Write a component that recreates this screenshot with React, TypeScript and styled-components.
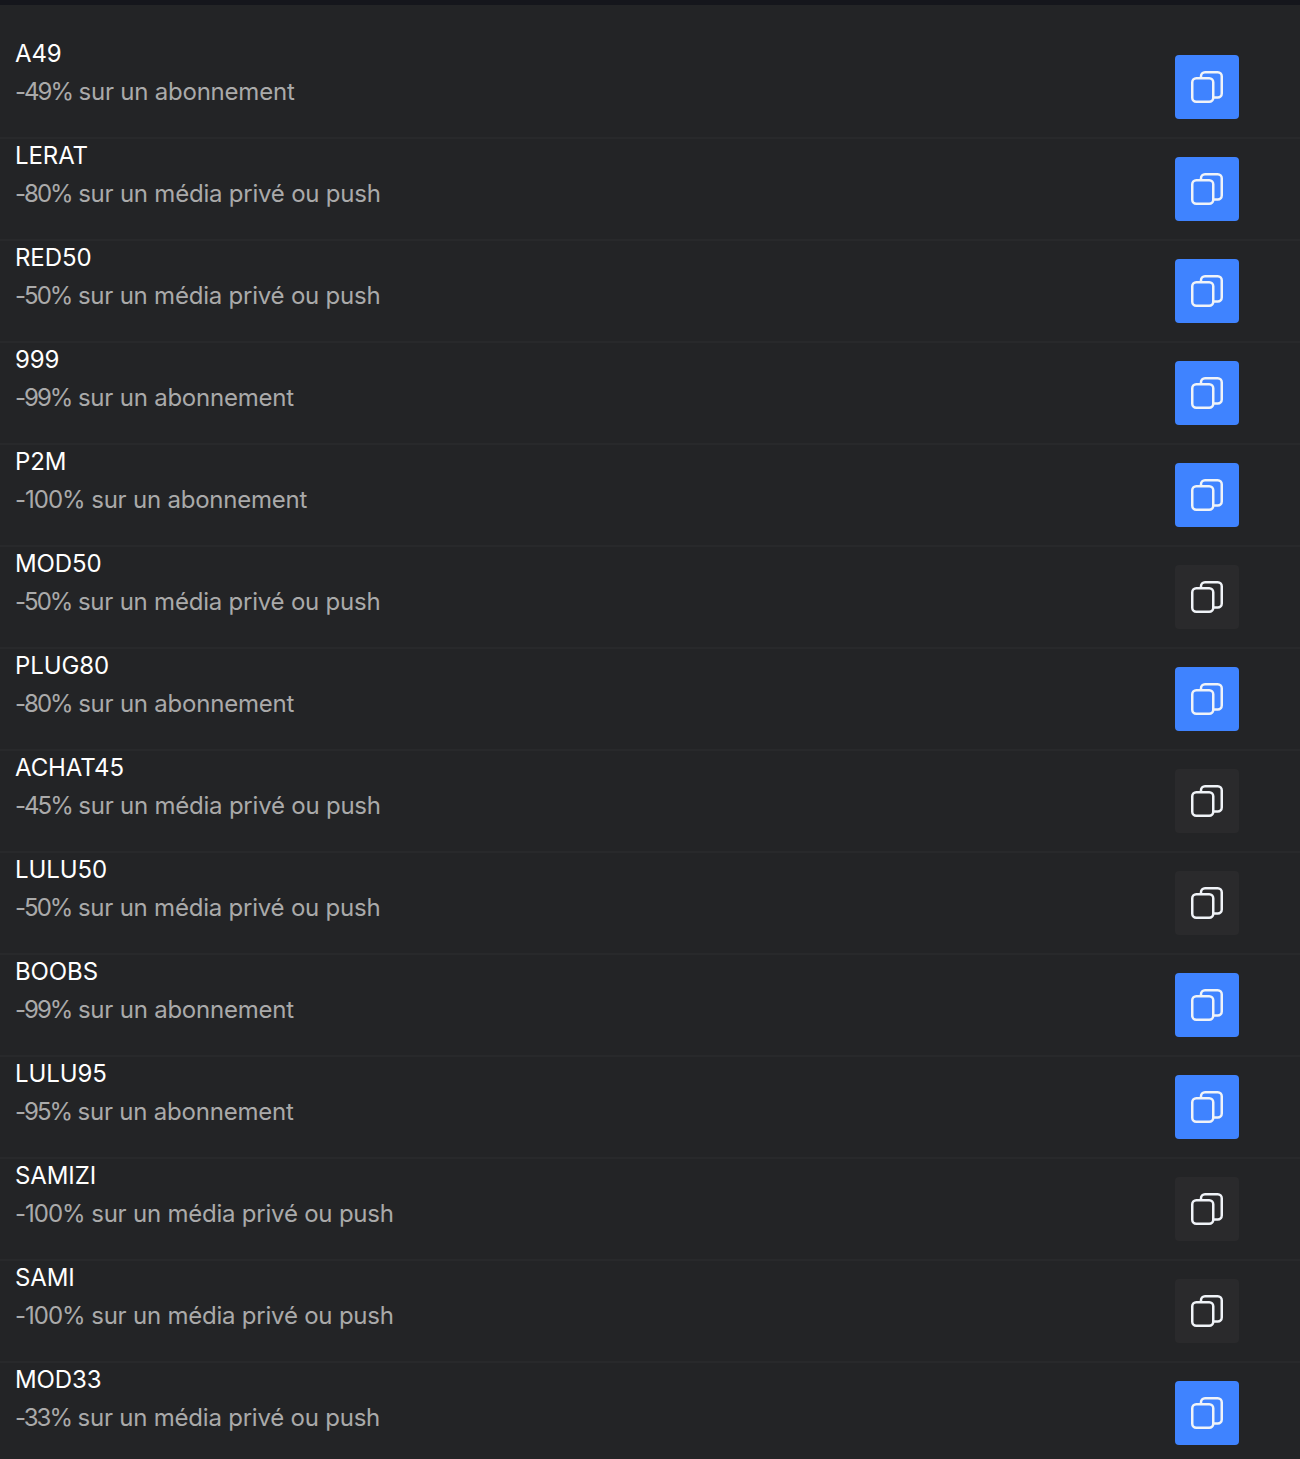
import styled, { createGlobalStyle } from 'styled-components';

const GlobalStyle = createGlobalStyle`
  html, body {
    margin: 0;
    padding: 0;
    background: #232426;
  }
  html {
    height: 100%;
    overflow: hidden;
  }
  body {
    font-family: 'Inter', 'Liberation Sans', sans-serif;
  }
`;

const TopBar = styled.div`
  height: 5px;
  background: #15161c;
`;

const CodeList = styled.ul`
  list-style: none;
  margin: 0;
  padding: 32px 0 0;
`;

const CodeRow = styled.li`
  display: flex;
  align-items: center;
  justify-content: space-between;
  box-sizing: border-box;
  height: 102px;
  padding: 0 61px 0 15px;
  border-bottom: 2px solid #28292b;
`;

const CodeText = styled.div`
  display: flex;
  flex-direction: column;
  gap: 10px;
  align-self: flex-start;
  padding-top: 3px;
`;

const CodeName = styled.span`
  font-size: 24px;
  line-height: 28px;
  letter-spacing: -0.1px;
  color: #fff;
`;

const CodeDesc = styled.span`
  font-size: 24px;
  line-height: 28px;
  letter-spacing: -0.22px;
  color: #aaaaaa;
`;

// les chiffres de la maquette sont plus serrés que le reste de la phrase
const Discount = styled.span<{ $full: boolean }>`
  letter-spacing: ${(p) => (p.$full ? '-1px' : '-2px')};
`;

const CopyButton = styled.button<{ $active: boolean }>`
  display: flex;
  align-items: center;
  justify-content: center;
  width: 64px;
  height: 64px;
  padding: 0;
  border: 0;
  border-radius: 4px;
  color: #f0f3f8;
  background: ${(p) => (p.$active ? '#3f83ff' : '#2a2a2c')};
`;

const CopyIcon = () => (
  <svg width="32" height="32" viewBox="0 0 32 32" fill="none" stroke="currentColor" strokeWidth="2.5">
    <rect x="1.25" y="7.25" width="21" height="23.5" rx="4" />
    <path d="M10 7V5.25a4 4 0 0 1 4-4h12.75a4 4 0 0 1 4 4V22.5a4 4 0 0 1-4 4H22.5" />
  </svg>
);

const SUB = 'sur un abonnement';
const MEDIA = 'sur un média privé ou push';

const codes = [
  { name: 'A49', discount: '-49%', target: SUB, active: true },
  { name: 'LERAT', discount: '-80%', target: MEDIA, active: true },
  { name: 'RED50', discount: '-50%', target: MEDIA, active: true },
  { name: '999', discount: '-99%', target: SUB, active: true },
  { name: 'P2M', discount: '-100%', target: SUB, active: true },
  { name: 'MOD50', discount: '-50%', target: MEDIA, active: false },
  { name: 'PLUG80', discount: '-80%', target: SUB, active: true },
  { name: 'ACHAT45', discount: '-45%', target: MEDIA, active: false },
  { name: 'LULU50', discount: '-50%', target: MEDIA, active: false },
  { name: 'BOOBS', discount: '-99%', target: SUB, active: true },
  { name: 'LULU95', discount: '-95%', target: SUB, active: true },
  { name: 'SAMIZI', discount: '-100%', target: MEDIA, active: false },
  { name: 'SAMI', discount: '-100%', target: MEDIA, active: false },
  { name: 'MOD33', discount: '-33%', target: MEDIA, active: true },
];

export default function App() {
  return (
    <>
      <GlobalStyle />
      <TopBar />
      <CodeList>
        {codes.map((code) => (
          <CodeRow key={code.name}>
            <CodeText>
              <CodeName>{code.name}</CodeName>
              <CodeDesc>
                <Discount $full={code.discount === '-100%'}>{code.discount}</Discount> {code.target}
              </CodeDesc>
            </CodeText>
            <CopyButton $active={code.active}>
              <CopyIcon />
            </CopyButton>
          </CodeRow>
        ))}
      </CodeList>
    </>
  );
}
